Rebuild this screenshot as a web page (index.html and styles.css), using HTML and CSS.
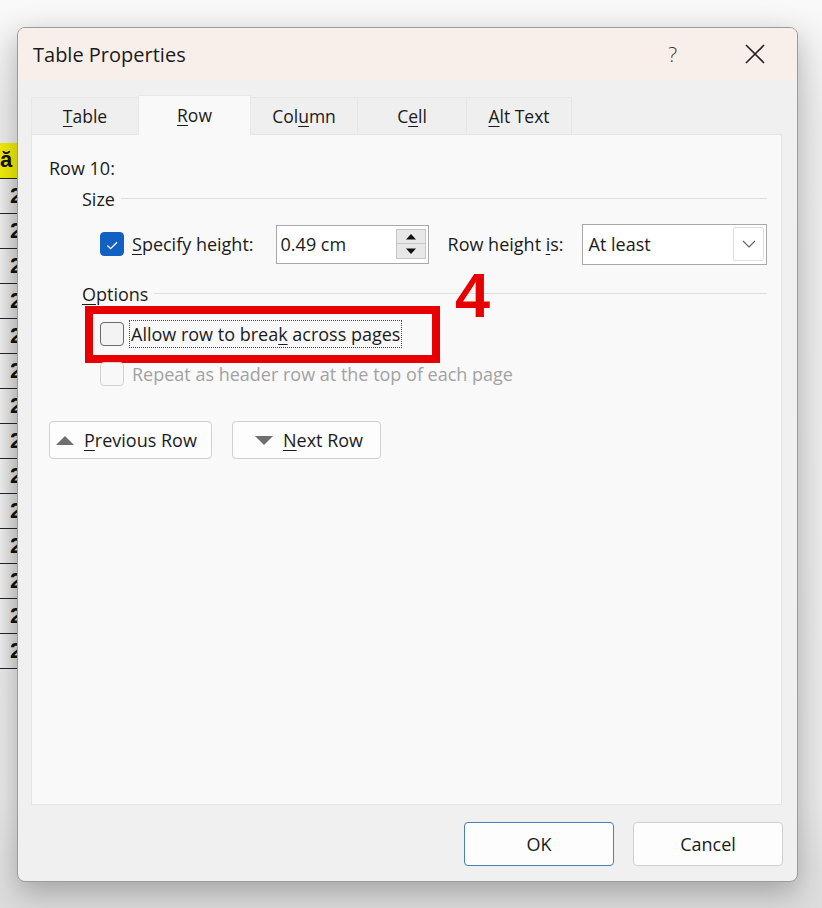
FILE: index.html
```html
<!DOCTYPE html>
<html>
<head>
    <title>Table Properties</title>
    <link rel="stylesheet" href="styles.css">
</head>
<body>
    <div class="desk">
        <div class="sheet">
            <div class="cell head">ă đ</div>
            <div class="cell">2</div>
            <div class="cell">2</div>
            <div class="cell">2</div>
            <div class="cell">2</div>
            <div class="cell">2</div>
            <div class="cell">2</div>
            <div class="cell">2</div>
            <div class="cell">2</div>
            <div class="cell">2</div>
            <div class="cell">2</div>
            <div class="cell">2</div>
            <div class="cell">2</div>
            <div class="cell">2</div>
            <div class="cell">2</div>
        </div>

        <div class="dialog">
            <div class="titlebar">
                <span class="title">Table Properties</span>
                <span class="help">?</span>
                <span class="close">
                    <svg width="22" height="22" viewBox="0 0 22 22"><path d="M2 2 L20 20 M20 2 L2 20" stroke="#222" stroke-width="1.6" fill="none"/></svg>
                </span>
            </div>

            <div class="tabs">
                <div class="tab"><u>T</u>able</div>
                <div class="tab selected"><u>R</u>ow</div>
                <div class="tab">Col<u>u</u>mn</div>
                <div class="tab">C<u>e</u>ll</div>
                <div class="tab"><u>A</u>lt Text</div>
            </div>

            <div class="panel">
                <div class="row-label">Row 10:</div>

                <div class="group">
                    <div class="group-head">Size</div>
                    <div class="size-row">
                        <span class="check on">
                            <svg width="24" height="24" viewBox="0 0 24 24"><path d="M7 12.5 L10.5 16 L17.5 9" stroke="#fff" stroke-width="1.4" fill="none"/></svg>
                        </span>
                        <span class="label"><u>S</u>pecify height:</span>
                        <div class="spin">
                            <span class="value">0.49 cm</span>
                            <div class="spin-buttons">
                                <span class="spin-btn">
                                    <svg width="12" height="7" viewBox="0 0 12 7"><path d="M1 6.5 L6 1 L11 6.5 Z" fill="#111"/></svg>
                                </span>
                                <span class="spin-btn">
                                    <svg width="12" height="7" viewBox="0 0 12 7"><path d="M1 0.5 L6 6 L11 0.5 Z" fill="#111"/></svg>
                                </span>
                            </div>
                        </div>
                        <span class="label height-is">Row height <u>i</u>s:</span>
                        <div class="select">
                            <span class="value">At least</span>
                            <span class="drop">
                                <svg width="14" height="8" viewBox="0 0 14 8"><path d="M1 1 L7 7 L13 1" stroke="#666" stroke-width="1.2" fill="none"/></svg>
                            </span>
                        </div>
                    </div>
                </div>

                <div class="group">
                    <div class="group-head"><u>O</u>ptions</div>
                    <div class="option-row marked">
                        <span class="check"></span>
                        <span class="label focus">Allow row to brea<u>k</u> across pages</span>
                        <span class="callout"></span>
                        <span class="callout-num">4</span>
                    </div>
                    <div class="option-row disabled">
                        <span class="check"></span>
                        <span class="label">Repeat as header row at the top of each page</span>
                    </div>
                </div>

                <div class="nav">
                    <button class="btn nav-btn">
                        <svg width="18" height="9" viewBox="0 0 18 9"><path d="M0 9 L9 0 L18 9 Z" fill="#6f6f6f"/></svg>
                        <span><u>P</u>revious Row</span>
                    </button>
                    <button class="btn nav-btn next">
                        <svg width="18" height="9" viewBox="0 0 18 9"><path d="M0 0 L9 9 L18 0 Z" fill="#6f6f6f"/></svg>
                        <span><u>N</u>ext Row</span>
                    </button>
                </div>
            </div>

            <div class="footer">
                <button class="btn action ok">OK</button>
                <button class="btn action">Cancel</button>
            </div>
        </div>
    </div>
</body>
</html>
```

FILE: styles.css
```css
* {
    box-sizing: border-box;
}

body {
    margin: 0;
    height: 908px;
    overflow: hidden;
    background: linear-gradient(#f9f9f9, #ededed 12%, #e9e9e9 88%, #dcdcdc);
    font-family: "Segoe UI", "Open Sans", sans-serif;
    color: #1b1b1b;
}

u {
    text-decoration-thickness: 1px;
    text-underline-offset: 3px;
}

.desk {
    display: flex;
    align-items: flex-start;
}

/* spreadsheet peeking out behind the dialog */
.sheet {
    width: 17px;
    flex-shrink: 0;
    margin-top: 143px;
    overflow: hidden;
}

.cell {
    height: 35px;
    padding-left: 10px;
    border-bottom: 1px solid #262626;
    background: linear-gradient(90deg, #f0f0f0, #dadada);
    font: bold 22px/34px "Liberation Sans", sans-serif;
    white-space: nowrap;
    color: #111;
}

.cell.head {
    height: 36px;
    padding-left: 0;
    background: #f1ec0a;
    letter-spacing: 2px;
}

.dialog {
    width: 781px;
    height: 855px;
    margin-top: 27px;
    display: flex;
    flex-direction: column;
    background: #f0f0f0;
    border: 1px solid #9c9c9c;
    border-radius: 8px;
    box-shadow: 0 10px 30px rgba(0, 0, 0, 0.28);
    overflow: hidden;
}

.titlebar {
    height: 52px;
    flex-shrink: 0;
    display: flex;
    align-items: center;
    padding-left: 15px;
    background: #f8efeb;
}

.title {
    font-size: 20px;
    flex: 1;
}

.help {
    font-size: 21px;
    font-weight: 300;
    color: #333;
    margin-right: 67px;
}

.close {
    display: flex;
    margin-right: 31px;
}

.tabs {
    display: flex;
    align-items: flex-end;
    height: 54px;
    padding-left: 13px;
    flex-shrink: 0;
}

.tab {
    height: 37px;
    display: flex;
    align-items: center;
    justify-content: center;
    font-size: 17.5px;
    background: #efefef;
    border: 1px solid #e6e6e6;
    border-bottom: none;
    margin-right: -1px;
}

.tab:nth-child(1) { width: 108px; }
.tab:nth-child(2) { width: 113px; }
.tab:nth-child(3) { width: 108px; }
.tab:nth-child(4) { width: 110px; }
.tab:nth-child(5) { width: 106px; }

.tab.selected {
    height: 40px;
    margin-bottom: -1px;
    padding-bottom: 2px;
    background: #f9f9f9;
    position: relative;
    z-index: 1;
    border-color: #e8e8e8;
}

.panel {
    width: 751px;
    height: 671px;
    margin-left: 13px;
    padding: 21px 14px 0 17px;
    background: #f9f9f9;
    border: 1px solid #e4e4e4;
    flex-shrink: 0;
    font-size: 18px;
}

.row-label {
    height: 24px;
    line-height: 24px;
}

.group {
    margin-left: 33px;
}

.group-head {
    height: 22px;
    line-height: 22px;
    display: flex;
    align-items: center;
    margin-top: 8px;
}

.group-head::after {
    content: "";
    flex: 1;
    height: 1px;
    margin: 0 0 2px 6px;
    background: #dedede;
}

.size-row {
    height: 40px;
    margin-top: 14px;
    padding-left: 18px;
    display: flex;
    align-items: center;
}

.check {
    width: 24px;
    height: 24px;
    flex-shrink: 0;
    border: 1px solid #6a6a6a;
    border-radius: 4px;
    background: #f3f3f3;
    display: flex;
}

.check.on {
    border-color: #1160c4;
    background: #1160c4;
}

.label {
    margin-left: 8px;
    white-space: nowrap;
}

.spin {
    width: 153px;
    height: 39px;
    margin-left: 22px;
    display: flex;
    align-items: center;
    justify-content: space-between;
    padding: 0 2px 0 4px;
    background: #fff;
    border: 1px solid #a9a9a9;
}

.spin-buttons {
    display: flex;
    flex-direction: column;
}

.spin-btn {
    width: 30px;
    height: 15px;
    display: flex;
    align-items: center;
    justify-content: center;
    background: #e8e8e8;
    border: 1px solid #c6c6c6;
}

.spin-btn + .spin-btn {
    border-top: none;
}

.height-is {
    margin-left: 19px;
}

.select {
    height: 41px;
    flex: 1;
    margin-left: 18px;
    display: flex;
    align-items: center;
    justify-content: space-between;
    padding: 0 2px 0 6px;
    background: #fff;
    border: 1px solid #a9a9a9;
}

.drop {
    width: 31px;
    height: 34px;
    display: flex;
    align-items: center;
    justify-content: center;
    border: 1px solid #e0e0e0;
    border-radius: 2px;
}

.group + .group .group-head {
    margin-top: 19px;
}

.option-row {
    height: 40px;
    padding-left: 18px;
    display: flex;
    align-items: center;
    position: relative;
}

.option-row.marked {
    margin-top: 9px;
}

.label.focus {
    margin-left: 6px;
    padding: 1px 1px;
    outline: 1px dotted #444;
}

.option-row.disabled {
    color: #a2a2a2;
}

.option-row.disabled .check {
    border-color: #d2d2d2;
    background: #f8f8f8;
}

/* red annotation drawn over the dialog */
.callout {
    position: absolute;
    left: 3px;
    top: -8px;
    width: 355px;
    height: 57px;
    border: 8px solid #e60000;
}

.callout-num {
    position: absolute;
    left: 373px;
    top: -55px;
    font: bold 63px "Liberation Sans", sans-serif;
    color: #e60000;
}

.nav {
    display: flex;
    gap: 20px;
    margin-top: 27px;
}

.btn {
    font-family: inherit;
    font-size: 18px;
    color: #1b1b1b;
    background: #fdfdfd;
    border: 1px solid #d0d0d0;
    border-radius: 4px;
    padding: 0;
}

.nav-btn {
    width: 163px;
    height: 38px;
    display: flex;
    align-items: center;
    padding-left: 6px;
    gap: 10px;
}

.nav-btn.next {
    width: 149px;
    padding-left: 22px;
}

.footer {
    flex: 1;
    display: flex;
    justify-content: flex-end;
    align-items: flex-start;
    padding: 17px 14px 0 0;
    gap: 19px;
}

.action {
    width: 150px;
    height: 44px;
}

.action.ok {
    border-color: #4a7fb7;
}
```
